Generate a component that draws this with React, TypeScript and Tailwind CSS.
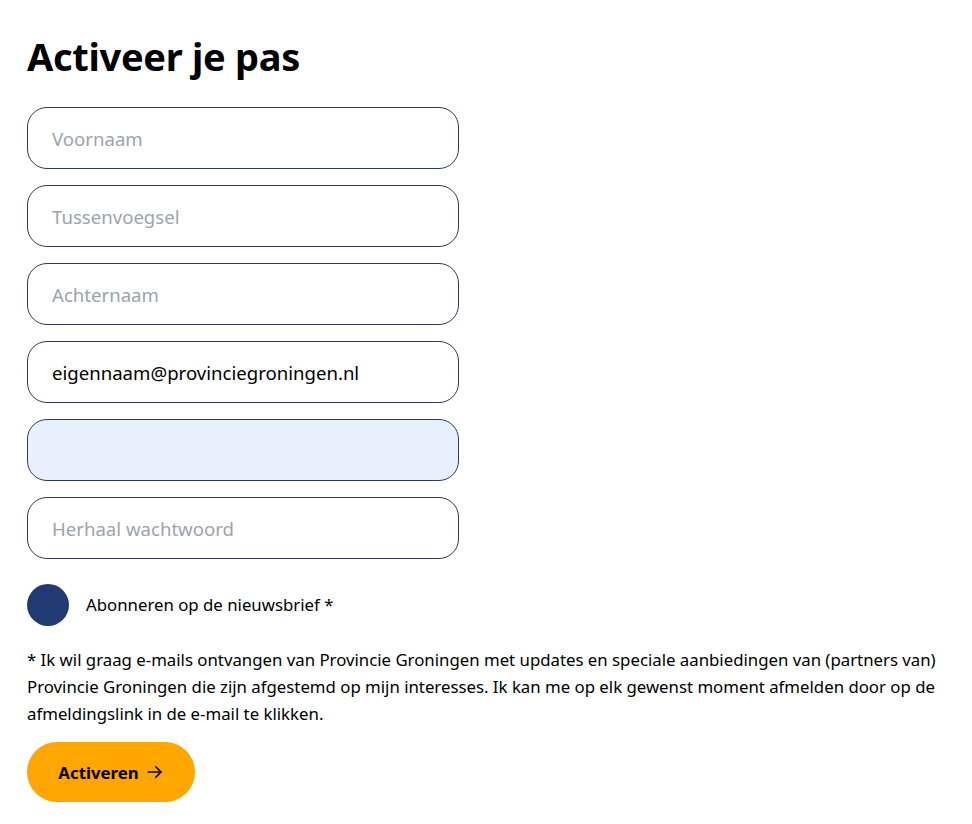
import { useState } from "react";

const fields = [
  { id: "firstName", placeholder: "Voornaam", type: "text", value: "" },
  { id: "infix", placeholder: "Tussenvoegsel", type: "text", value: "" },
  { id: "lastName", placeholder: "Achternaam", type: "text", value: "" },
  { id: "email", placeholder: "E-mailadres", type: "email", value: "eigennaam@provinciegroningen.nl" },
  { id: "password", placeholder: "", type: "password", value: "", autofill: true },
  { id: "repeatPassword", placeholder: "Herhaal wachtwoord", type: "password", value: "" },
];

export default function App() {
  const [subscribe, setSubscribe] = useState(false);

  return (
    <div className="min-h-screen bg-white px-[27px] pt-[30px] text-black" style={{ fontFamily: '"Noto Sans", "Open Sans", sans-serif' }}>
      <h1 className="text-[38px] font-bold leading-[52px] tracking-[-0.3px]">Activeer je pas</h1>
      <form className="mt-[25px] flex flex-col" noValidate onSubmit={(e) => e.preventDefault()}>
        <div className="flex w-[432px] flex-col gap-4">
          {fields.map((field) => (
            <input
              key={field.id}
              id={field.id}
              type={field.type}
              defaultValue={field.value}
              placeholder={field.placeholder}
              className={`h-[62px] w-full rounded-[20px] border border-[#2c3b55] px-6 text-[18.6px] text-black outline-none placeholder:text-[#9ca3af] ${
                field.autofill ? "bg-[#e8f0fe]" : "bg-white"
              }`}
            />
          ))}
        </div>
        <label className="mt-[25px] flex cursor-pointer items-center gap-[17px]">
          <button
            type="button"
            onClick={() => setSubscribe(!subscribe)}
            className="h-[42px] w-[42px] shrink-0 rounded-full bg-[#213b72]"
          />
          <span className="text-[16.8px]">Abonneren op de nieuwsbrief *</span>
        </label>
        <p className="mt-[21px] max-w-[930px] text-[16.8px] leading-[26.8px]">
          * Ik wil graag e-mails ontvangen van Provincie Groningen met updates en speciale aanbiedingen van (partners van)
          Provincie Groningen die zijn afgestemd op mijn interesses. Ik kan me op elk gewenst moment afmelden door op de
          afmeldingslink in de e-mail te klikken.
        </p>
        <div className="mt-[15px]">
          <button
            type="submit"
            className="flex h-[60px] w-[168px] items-center justify-center gap-[7px] rounded-full bg-[#ffa600] text-[16.8px] font-bold"
          >
            Activeren
            <svg width="18" height="18" viewBox="0 0 24 24" fill="none" stroke="currentColor" strokeWidth="2.2" strokeLinecap="round" strokeLinejoin="round">
              <path d="M3 12h17" />
              <path d="M13 5l7 7-7 7" />
            </svg>
          </button>
        </div>
      </form>
    </div>
  );
}
